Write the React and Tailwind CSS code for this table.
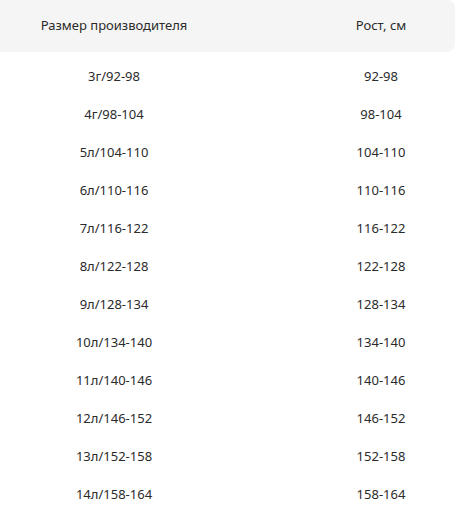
import React from "react";

const rows = [
  ["3г/92-98", "92-98"],
  ["4г/98-104", "98-104"],
  ["5л/104-110", "104-110"],
  ["6л/110-116", "110-116"],
  ["7л/116-122", "116-122"],
  ["8л/122-128", "122-128"],
  ["9л/128-134", "128-134"],
  ["10л/134-140", "134-140"],
  ["11л/140-146", "140-146"],
  ["12л/146-152", "146-152"],
  ["13л/152-158", "152-158"],
  ["14л/158-164", "158-164"],
];

export default function App() {
  return (
    <div className="w-[455px] min-h-[525px] bg-white text-[13px] text-[#2b2b2b] font-['Noto_Sans',sans-serif]">
      <div className="flex h-[52px] items-center bg-[#f5f5f5] rounded-r-lg">
        <div className="w-[228px] text-center">Размер производителя</div>
        <div className="ml-auto w-[148px] text-center">Рост, см</div>
      </div>
      <div className="pt-[6px]">
        {rows.map(([size, height]) => (
          <div key={size} className="flex h-[38px] items-center">
            <div className="w-[228px] text-center">{size}</div>
            <div className="ml-auto w-[148px] text-center">{height}</div>
          </div>
        ))}
      </div>
    </div>
  );
}
